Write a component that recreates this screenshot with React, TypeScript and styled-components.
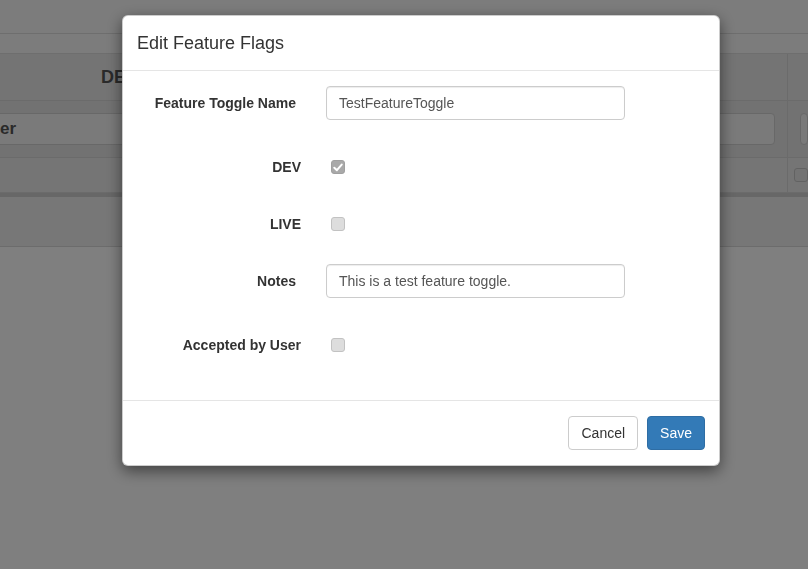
import React from "react";
import styled, { createGlobalStyle } from "styled-components";

const GlobalStyle = createGlobalStyle`
  * { box-sizing: border-box; }
  html, body {
    margin: 0;
    padding: 0;
    background: #fff;
    font-family: "Liberation Sans", Arial, Helvetica, sans-serif;
    font-size: 14px;
    color: #333;
    overflow: hidden;
  }
`;

// ---------- page behind the modal ----------

const Page = styled.div`
  width: 808px;
  height: 569px;
  background: #fff;
`;

const TopBar = styled.div<{ $h: number }>`
  height: ${(p) => p.$h}px;
  background: #f8f8f8;
  border-bottom: 1px solid #dcdcdc;
`;

const Table = styled.div`
  display: grid;
  grid-template-columns: 240px 548px 1fr;
`;

const Cell = styled.div<{ $bg: string; $h: number; $last?: boolean }>`
  height: ${(p) => p.$h}px;
  background: ${(p) => p.$bg};
  border-bottom: 1px solid #d6d6d6;
  border-right: ${(p) => (p.$last ? "none" : "1px solid #d6d6d6")};
  display: flex;
  align-items: center;
  padding: 0 12px;
`;

const HeadText = styled.span`
  flex: 1;
  text-align: center;
  font-weight: bold;
  font-size: 18px;
  color: #555;
`;

const FilterBox = styled.div<{ $flush?: boolean }>`
  flex: 1;
  height: 32px;
  background: #f4f4f4;
  border: 1px solid #d0d0d0;
  border-radius: 4px;
  display: flex;
  align-items: center;
  font-weight: bold;
  font-size: 17px;
  color: #555;
  margin-left: ${(p) => (p.$flush ? "-12px" : "0")};
  border-left: ${(p) => (p.$flush ? "none" : "1px solid #d0d0d0")};
  border-top-left-radius: ${(p) => (p.$flush ? "0" : "4px")};
  border-bottom-left-radius: ${(p) => (p.$flush ? "0" : "4px")};
`;

const MiniCheck = styled.span`
  width: 14px;
  height: 14px;
  margin-left: -6px;
  border-radius: 3px;
  border: 1px solid #c4c4c4;
  background: #e6e6e6;
`;

const Band = styled.div`
  height: 4px;
  background: #cfcfcf;
`;

const LowerBar = styled.div`
  height: 50px;
  background: #efefef;
  border-bottom: 1px solid #d8d8d8;
`;

// ---------- modal ----------

const Backdrop = styled.div`
  position: fixed;
  inset: 0;
  background: rgba(0, 0, 0, 0.5);
  padding: 15px 0 0 122px;
`;

const Modal = styled.div`
  width: 598px;
  background: #fff;
  border: 1px solid rgba(0, 0, 0, 0.2);
  border-radius: 6px;
  box-shadow: 0 5px 15px rgba(0, 0, 0, 0.5);
`;

const Header = styled.div`
  padding: 15px 15px 15px 14px;
  border-bottom: 1px solid #e5e5e5;
`;

const Title = styled.h4`
  margin: 0;
  font-size: 18px;
  font-weight: normal;
  line-height: 24px;
  color: #333;
`;

const Body = styled.div`
  padding: 15px;
`;

const Row = styled.div<{ $gap: number }>`
  display: grid;
  grid-template-columns: 163px 299px;
  column-gap: 25px;
  align-items: center;
  height: 34px;
  margin-bottom: ${(p) => p.$gap}px;
`;

const Label = styled.label<{ $inset?: boolean }>`
  text-align: right;
  font-weight: bold;
  font-size: 14px;
  color: #333;
  padding-right: ${(p) => (p.$inset ? "5px" : "0")};
  white-space: nowrap;
`;

const Input = styled.div`
  height: 34px;
  padding: 6px 12px;
  border: 1px solid #ccc;
  border-radius: 4px;
  box-shadow: inset 0 1px 1px rgba(0, 0, 0, 0.075);
  font-size: 14px;
  line-height: 20px;
  color: #555;
`;

const Check = styled.span<{ $on?: boolean }>`
  width: 14px;
  height: 14px;
  margin-left: 5px;
  border-radius: 3px;
  border: 1px solid ${(p) => (p.$on ? "#a0a0a0" : "#c2c2c2")};
  background: ${(p) => (p.$on ? "#a9a9a9" : "#dddddd")};
  display: flex;
  align-items: center;
  justify-content: center;
`;

const Footer = styled.div`
  padding: 15px 14px 15px 15px;
  border-top: 1px solid #e5e5e5;
  display: flex;
  justify-content: flex-end;
  gap: 9px;
`;

const Button = styled.button<{ $primary?: boolean }>`
  height: 34px;
  padding: 6px 12px;
  font-family: inherit;
  font-size: 14px;
  line-height: 20px;
  border-radius: 4px;
  border: 1px solid ${(p) => (p.$primary ? "#2e6da4" : "#ccc")};
  background: ${(p) => (p.$primary ? "#337ab7" : "#fff")};
  color: ${(p) => (p.$primary ? "#fff" : "#333")};
`;

const Tick = () => (
  <svg width="10" height="9" viewBox="0 0 10 9">
    <path
      d="M1.3 4.8 L3.9 7.2 L8.7 1.6"
      fill="none"
      stroke="#fff"
      strokeWidth="2"
      strokeLinecap="round"
      strokeLinejoin="round"
    />
  </svg>
);

export default function App() {
  return (
    <>
      <GlobalStyle />
      <Page>
        <TopBar $h={34} />
        <TopBar $h={20} />
        <Table>
          <Cell $bg="#e9e9e9" $h={47}>
            <HeadText>DEV</HeadText>
          </Cell>
          <Cell $bg="#e9e9e9" $h={47} />
          <Cell $bg="#e9e9e9" $h={47} $last />

          <Cell $bg="#e4e4e4" $h={57}>
            <FilterBox $flush>er</FilterBox>
          </Cell>
          <Cell $bg="#e4e4e4" $h={57}>
            <FilterBox />
          </Cell>
          <Cell $bg="#e4e4e4" $h={57} $last>
            <FilterBox />
          </Cell>

          <Cell $bg="#ebebeb" $h={35} />
          <Cell $bg="#ebebeb" $h={35} />
          <Cell $bg="#ebebeb" $h={35} $last>
            <MiniCheck />
          </Cell>
        </Table>
        <Band />
        <LowerBar />
      </Page>

      <Backdrop>
        <Modal>
          <Header>
            <Title>Edit Feature Flags</Title>
          </Header>
          <Body>
            <Row $gap={30}>
              <Label $inset>Feature Toggle Name</Label>
              <Input>TestFeatureToggle</Input>
            </Row>
            <Row $gap={23}>
              <Label>DEV</Label>
              <Check $on>
                <Tick />
              </Check>
            </Row>
            <Row $gap={23}>
              <Label>LIVE</Label>
              <Check />
            </Row>
            <Row $gap={30}>
              <Label $inset>Notes</Label>
              <Input>This is a test feature toggle.</Input>
            </Row>
            <Row $gap={23}>
              <Label>Accepted by User</Label>
              <Check />
            </Row>
          </Body>
          <Footer>
            <Button>Cancel</Button>
            <Button $primary>Save</Button>
          </Footer>
        </Modal>
      </Backdrop>
    </>
  );
}
